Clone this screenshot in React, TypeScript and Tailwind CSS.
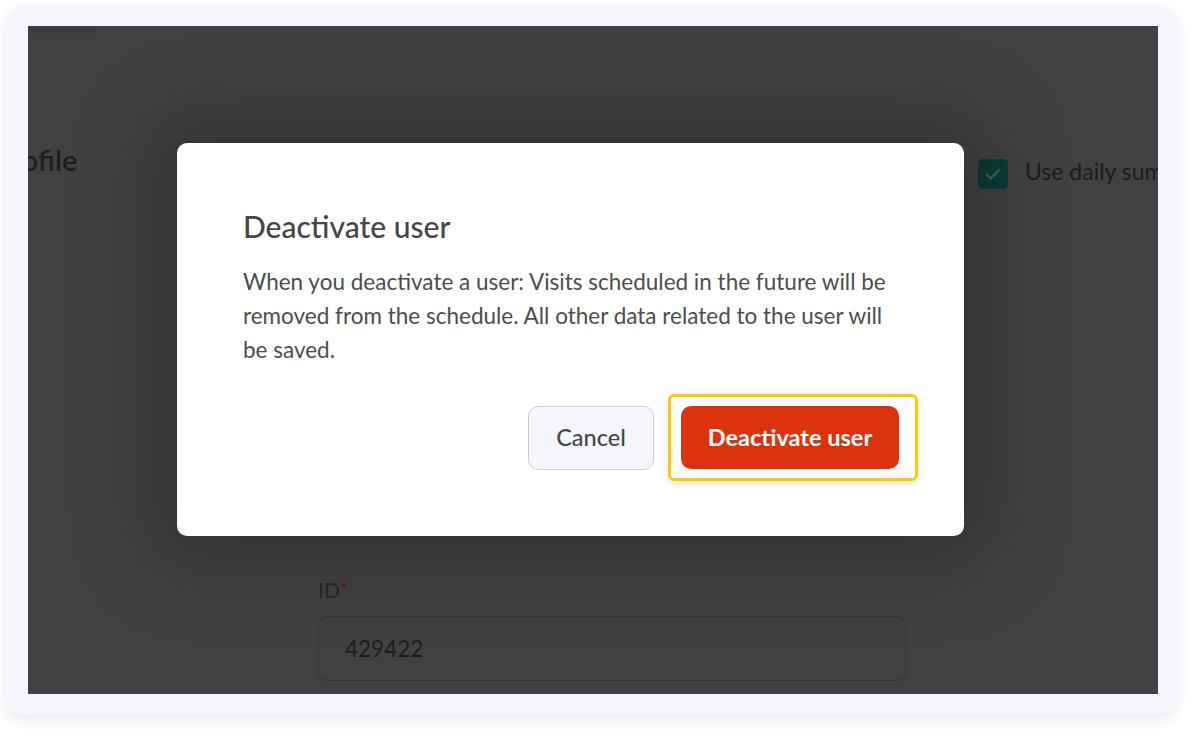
import React from "react";

export default function App() {
  return (
    <div className="w-[1202px] h-[739px] bg-white pt-[5px] pl-[5px] overflow-hidden" style={{ fontFamily: "Lato, 'Open Sans', sans-serif" }}>
      <div className="w-[1172px] h-[709px] rounded-[20px] bg-[#f5f6fb] shadow-[0_6px_14px_rgba(30,40,80,0.10)] pt-[21px] pl-[23px]">
        <div className="relative w-[1130px] h-[668px] overflow-hidden bg-[#414142]">
          {/* underlying page */}
          <div className="absolute left-0 top-0 w-[69px] h-[7px] bg-[#3b3c3f] rounded-br-[4px]" />
          <div className="flex flex-col h-full">
            <div className="flex items-start pt-[116px]">
              <div className="ml-[-34px] text-[29px] font-semibold text-[#1d1e22] leading-[36px]">Profile</div>
              <div className="ml-auto w-[240px] shrink-0 flex items-center gap-[17px] mr-[-60px] pt-[12px]">
                <div className="w-[30px] h-[30px] shrink-0 rounded-[5px] bg-[#0c3b35] flex items-center justify-center">
                  <svg width="20" height="20" viewBox="0 0 20 20" fill="none">
                    <path d="M3.5 10.5l4.2 4L16.5 5.5" stroke="#3f6660" strokeWidth="1.8" strokeLinecap="round" strokeLinejoin="round" />
                  </svg>
                </div>
                <span className="text-[23px] text-[#1c1b22] whitespace-nowrap mb-[5px]">Use daily summary</span>
              </div>
            </div>
            <div className="mt-auto pl-[290px] pb-[13px]">
              <div className="text-[21px] text-[#25262c] leading-[28px]">
                ID<span className="text-[#5a1c17]">*</span>
              </div>
              <div className="mt-[12px] w-[588px] h-[65px] rounded-[10px] border border-[#34353a] flex items-center pl-[26px] text-[22.5px] text-[#1c1c20]">
                429422
              </div>
            </div>
          </div>

          {/* modal */}
          <div className="absolute left-[149px] top-[117px] w-[787px] h-[393px] bg-white rounded-[10px] shadow-[0_0_80px_30px_rgba(0,0,0,0.22)] pl-[66px] pr-[46px] pt-[65px]">
            <h2 className="text-[30px] font-medium leading-[36px] text-[#464646]">Deactivate user</h2>
            <p className="mt-[21px] text-[22.5px] leading-[34px] text-[#4d4d4d] w-[660px]">
              When you deactivate a user: Visits scheduled in the future will be removed from the schedule. All other data related to the user will be saved.
            </p>
            <div className="mt-[27px] flex justify-end items-center gap-[14px]">
              <button className="w-[126px] h-[64px] rounded-[10px] border border-[#c8cfe0] bg-[#f5f6fb] text-[23.5px] font-medium text-[#464646]">
                Cancel
              </button>
              <div className="rounded-[6px] border-[3px] border-[#fecb00] pl-[10px] pr-[16px] py-[9px] shadow-[0_2px_8px_rgba(0,0,0,0.12)]">
                <button className="w-[218px] h-[63px] rounded-[10px] bg-[#dc330c] text-white text-[23.5px] font-bold">
                  Deactivate user
                </button>
              </div>
            </div>
          </div>
        </div>
      </div>
    </div>
  );
}
